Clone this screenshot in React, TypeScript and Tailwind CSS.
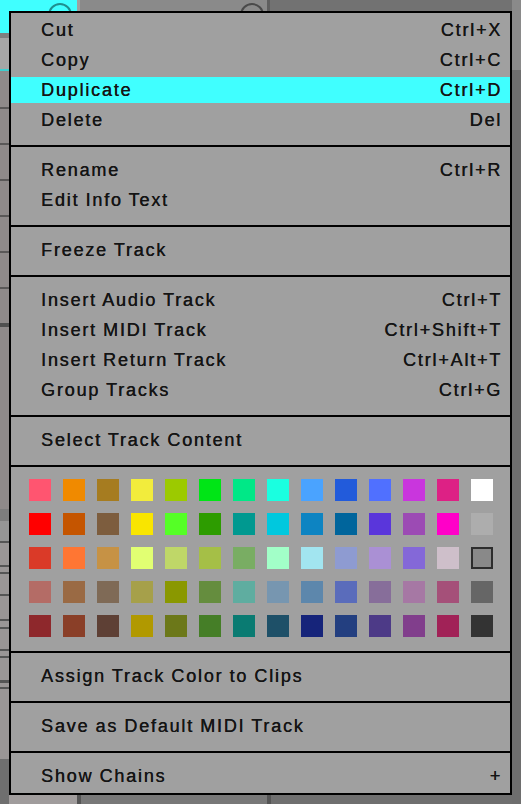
import React from "react";

type Item = { label: string; shortcut?: string; active?: boolean };

const sections: Item[][] = [
  [
    { label: "Cut", shortcut: "Ctrl+X" },
    { label: "Copy", shortcut: "Ctrl+C" },
    { label: "Duplicate", shortcut: "Ctrl+D", active: true },
    { label: "Delete", shortcut: "Del" },
  ],
  [
    { label: "Rename", shortcut: "Ctrl+R" },
    { label: "Edit Info Text" },
  ],
  [{ label: "Freeze Track" }],
  [
    { label: "Insert Audio Track", shortcut: "Ctrl+T" },
    { label: "Insert MIDI Track", shortcut: "Ctrl+Shift+T" },
    { label: "Insert Return Track", shortcut: "Ctrl+Alt+T" },
    { label: "Group Tracks", shortcut: "Ctrl+G" },
  ],
  [{ label: "Select Track Content" }],
];

const colors: string[] = [
  "#ff5570", "#f08a00", "#a67c20", "#f2ec3c", "#9cca00", "#00e516", "#00e887", "#1affe0", "#4aa3ff", "#225bdb", "#5070ff", "#c936dd", "#dd2185", "#ffffff",
  "#ff0000", "#c55500", "#7d5d3e", "#f9e500", "#55ff26", "#2d9c00", "#009990", "#00c8de", "#0d84c2", "#00659c", "#5a36db", "#9c4bb4", "#ff00c8", "#adadad",
  "#da3a28", "#ff7633", "#c69245", "#e1ff72", "#bfd768", "#a5bf47", "#79ad63", "#a2ffc8", "#a2e5f0", "#8e9bd1", "#aa90d4", "#8468d8", "#cebfca", "SELECTED",
  "#b46c66", "#9a6a44", "#7f6a56", "#a6a04a", "#8a9800", "#658d3e", "#5fada0", "#7796b0", "#5d87ac", "#5a6cbb", "#876e9a", "#a678a4", "#a55079", "#666666",
  "#8e282c", "#8a3f28", "#5e4035", "#b19900", "#6c7819", "#457e27", "#0a7b72", "#1e5068", "#16247a", "#233f80", "#4d3a87", "#813e8c", "#a12257", "#333333",
];

function Row({ item }: { item: Item }) {
  if (item.active) {
    return (
      <div className="h-[30px] py-[2px]">
        <div className="h-full bg-[#40ffff] flex items-center justify-between pl-[30px] pr-[8px]">
          <span>{item.label}</span>
          {item.shortcut && <span>{item.shortcut}</span>}
        </div>
      </div>
    );
  }
  return (
    <div className="h-[30px] flex items-center justify-between pl-[30px] pr-[8px]">
      <span>{item.label}</span>
      {item.shortcut && <span>{item.shortcut}</span>}
    </div>
  );
}

function Sep() {
  return <div className="h-[2px] bg-black" />;
}

const leftStrip: [number, string][] = [
  [33, "#40ffff"],
  [5, "#808080"],
  [31, "#a6a6a6"],
  [2, "#3fcfcf"],
  [36, "#8f8a8a"],
  [2, "#5a5858"],
  [34, "#8f8a8a"],
  [2, "#5a5858"],
  [34, "#8f8a8a"],
  [2, "#5a5858"],
  [34, "#8f8a8a"],
  [2, "#5a5858"],
  [34, "#8f8a8a"],
  [2, "#5a5858"],
  [34, "#8f8a8a"],
  [2, "#5a5858"],
  [34, "#8f8a8a"],
  [4, "#505050"],
  [182, "#8f8a8a"],
  [12, "#7d7d7d"],
  [20, "#959595"],
  [2, "#555555"],
  [22, "#9a9696"],
  [2, "#555555"],
  [5, "#9a9696"],
  [2, "#555555"],
  [20, "#9a9696"],
  [2, "#555555"],
  [23, "#9a9696"],
  [2, "#555555"],
  [6, "#9a9696"],
  [2, "#555555"],
  [20, "#9a9696"],
  [2, "#555555"],
  [5, "#9a9696"],
  [2, "#555555"],
  [22, "#9a9696"],
  [3, "#555555"],
  [4, "#9a9696"],
  [2, "#555555"],
  [70, "#9a9696"],
];

export default function App() {
  return (
    <div className="relative w-[521px] h-[804px] overflow-hidden bg-[#6f6f6f] font-['Liberation_Sans',Arial,sans-serif]">
      {/* background app */}
      <div className="flex h-full">
        <div className="w-[9px] flex flex-col shrink-0">
          {leftStrip.map(([h, c], i) => (
            <div key={i} style={{ height: h, background: c }} className="shrink-0" />
          ))}
        </div>
        <div className="flex-1 flex flex-col">
          <div className="h-[11px] flex">
            <div className="w-[68px] bg-[#40ffff]" />
            <div className="w-[3px] bg-[#a0a0a0]" />
            <div className="w-[187px] bg-[#8a8a8a]" />
            <div className="w-[3px] bg-[#5f5f5f]" />
            <div className="flex-1 bg-[#727272]" />
          </div>
          <div className="flex-1" />
          <div className="h-[9px] flex">
            <div className="w-[68px] bg-[#a09c9c]" />
            <div className="w-[4px] bg-[#555]" />
            <div className="w-[186px] bg-[#787878]" />
            <div className="w-[4px] bg-[#555]" />
            <div className="flex-1 bg-[#6f6f6f]" />
          </div>
        </div>
        <div className="w-[9px] shrink-0 flex flex-col">
          <div className="h-[70px] bg-[#8a8a8a]" />
          <div className="flex-1 bg-[#6e6e6e]" />
        </div>
      </div>
      <div className="absolute left-[48px] top-[3px] w-[24px] h-[24px] rounded-full border-2 border-[#1f8f8f]" />
      <div className="absolute left-[240px] top-[3px] w-[24px] h-[24px] rounded-full border-2 border-[#4a4a4a]" />

      {/* context menu */}
      <div className="absolute left-[9px] top-[11px] w-[503px] border-2 border-black bg-[#a0a0a0] text-[18px] leading-none tracking-[1.8px] [word-spacing:-0.6px] text-[#141414] [text-shadow:0.35px_0_0_#141414]">
        <div className="pt-[2px] pb-[10px]">
          {sections[0].map((it) => (
            <Row key={it.label} item={it} />
          ))}
        </div>
        {sections.slice(1).map((sec, i) => (
          <React.Fragment key={i}>
            <Sep />
            <div className="pt-[8px] pb-[10px]">
              {sec.map((it) => (
                <Row key={it.label} item={it} />
              ))}
            </div>
          </React.Fragment>
        ))}
        <Sep />
        <div className="pt-[12px] pb-[14px] pl-[18px]">
          <div className="grid grid-cols-[repeat(14,22px)] gap-[12px]">
            {colors.map((c, i) =>
              c === "SELECTED" ? (
                <div key={i} className="w-[22px] h-[22px] border-2 border-[#2d2d2d] bg-[#898989]" />
              ) : (
                <div key={i} className="w-[22px] h-[22px]" style={{ background: c }} />
              )
            )}
          </div>
        </div>
        <Sep />
        <div className="pt-[8px] pb-[10px]">
          <Row item={{ label: "Assign Track Color to Clips" }} />
        </div>
        <Sep />
        <div className="pt-[8px] pb-[10px]">
          <Row item={{ label: "Save as Default MIDI Track" }} />
        </div>
        <Sep />
        <div className="pt-[8px] pb-[2px]">
          <Row item={{ label: "Show Chains", shortcut: "+" }} />
        </div>
      </div>
    </div>
  );
}
